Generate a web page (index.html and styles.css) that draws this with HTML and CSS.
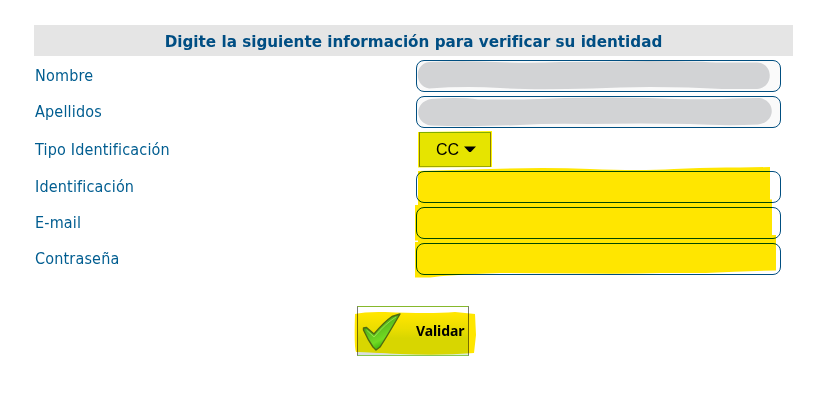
FILE: index.html
```html
<!DOCTYPE html>
<html lang="es">
<head>
<meta charset="utf-8">
<title>Verificar identidad</title>
<link rel="stylesheet" href="styles.css">
</head>
<body>
<form class="form">
  <h1 class="title">Digite la siguiente información para verificar su identidad</h1>
  <div class="rows">
    <div class="row"><label>Nombre</label><div class="field muted"></div></div>
    <div class="row"><label>Apellidos</label><div class="field muted"></div></div>
    <div class="row row-select"><label>Tipo Identificación</label>
      <div class="select"><span>CC</span><svg width="12" height="7" viewBox="0 0 12 7"><path d="M0 .5H12L6.8 6H5.2Z"/></svg></div></div>
    <div class="row"><label>Identificación</label><div class="field"></div></div>
    <div class="row"><label>E-mail</label><div class="field"></div></div>
    <div class="row"><label>Contraseña</label><div class="field"></div></div>
  </div>
  <div class="actions">
    <div class="submit"><span>Validar</span></div>
  </div>
</form>
<svg class="marks" width="822" height="400" viewBox="0 0 822 400">
  <g fill="#d2d3d5">
    <path d="M429 62Q462 60.500 495 62Q530 63.500 560 62Q605 62 648 61Q690 61 716 62.500H757C774 63 774 88 757 89H722Q690 87 650 87Q620 87 592 88.500Q530 90 500 88Q465 86 429 88.500C414 86 414 64 429 62Z"/>
    <path d="M431 99Q460 97 478 99.500Q530 100 565 98Q605 97 648 98Q690 100 722 99Q745 98 760 98C776 101 776 122 758 124.500Q725 126 690 124Q640 123 590 124Q550 123 520 125Q470 127 431 125.500C414 123 414 102 431 99Z"/>
  </g>
</svg>
<svg class="marks marks-multiply" width="822" height="400" viewBox="0 0 822 400">
  <path fill="#ffe600" d="M418 171Q450 170 490 169Q545 167 590 169Q640 171 674 169Q705 167 740 167.500L770 167V199.500H772V235H776V270.500Q740 271 706 273H660Q630 274 580 273.500Q530 273 500 273Q445 275 430 277.500H415V242H418V240.500H415V205H418Z"/>
  <path fill="#fff200" d="M418 132L492 131L492 167L418 167.500Z"/>
  <path fill="#ffe600" d="M355 314Q365 311.500 385 312Q430 314 455 312L475 314L476 335L474 353Q440 356 400 354Q375 353 356 352Q354 348 355 314Z"/>
</svg>
<svg class="marks" width="822" height="400" viewBox="0 0 822 400">
  <defs><linearGradient id="tick" gradientUnits="userSpaceOnUse" x1="364" y1="318" x2="380" y2="350"><stop offset="0" stop-color="#1f8a05"/><stop offset=".4" stop-color="#59bc1c"/><stop offset=".75" stop-color="#72da23"/><stop offset="1" stop-color="#2fae08"/></linearGradient></defs>
  <path fill="#d8dde2" d="M358 352.500L380 353L400 355H358Z"/>
  <path d="M363.500 328L366.500 327.500L374 334Q384 322 392 316.500L400 314C393 326 386 338 380 347L376 350L373 347Q368 340 363.500 330Z" fill="url(#tick)" stroke="#4f6a10" stroke-width="1.400" stroke-linejoin="round"/>
  <path d="M366.500 330L374 337Q386 323 396 317" fill="none" stroke="#b5ef65" stroke-width="1" opacity=".65"/>
</svg>
</body>
</html>
```
FILE: styles.css
```css
* { box-sizing: border-box; }
body { margin: 0; height: 400px; background: #fff; position: relative; overflow: hidden; }
.form { margin-left: 34px; padding-top: 25px; width: 759px; color: #005d90; }
.title {
  margin: 0; padding-top: 2px; height: 31px; background: #e5e5e5; color: #004e83;
  display: flex; align-items: center; justify-content: center;
  font: bold 15.2px/20px "DejaVu Sans", sans-serif; white-space: nowrap;
}
.rows { display: flex; flex-direction: column; gap: 4px; padding-top: 4px; }
.row { display: grid; grid-template-columns: 382px 365px; align-items: center; height: 32px; }
.row-select { height: 35px; }
label {
  padding-left: 1px; white-space: nowrap;
  font: 16px/20px "DejaVu Sans Condensed", "DejaVu Sans", sans-serif;
  font-stretch: condensed; letter-spacing: .18px;
}
.field { height: 32px; border: 1px solid #004e80; border-radius: 8px; background: #fff; }
.muted { background: #fafafa; }
.select {
  margin-left: 3px; width: 72px; height: 35px; background: #e6f1e6;
  border: 1px solid #868686; border-top-color: #7fb81c; border-bottom-color: #9cb02d;
  display: flex; align-items: center; gap: 5px; padding-left: 16px;
  color: #000; font: 16px/20px "Liberation Sans", Arial, sans-serif;
}
.actions { padding: 31px 0 0 323px; }
.submit {
  width: 112px; height: 50px; display: flex; align-items: center; padding-left: 58px;
  border: 1px solid #777; border-top-color: #86b82c; border-bottom-color: #86c850;
  background: linear-gradient(#fff 0 15%, #ebf6eb 45%, #d8eed8 65%, #d8eed8);
  color: #000; font: bold 14px/20px "Noto Sans", "Open Sans", sans-serif; letter-spacing: -.1px;
}
.marks { position: absolute; left: 0; top: 0; pointer-events: none; }
.marks-multiply { mix-blend-mode: multiply; }
```
